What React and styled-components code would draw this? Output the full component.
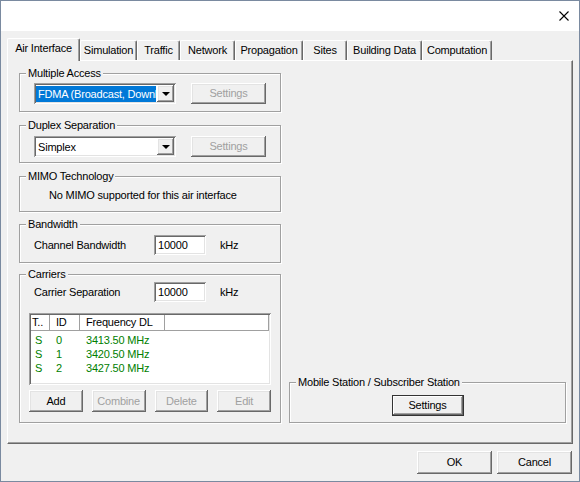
import React from "react";
import styled, { createGlobalStyle, css } from "styled-components";

const tabs = [
    { label: "Air Interface", w: 73 },
    { label: "Simulation", w: 57 },
    { label: "Traffic", w: 43 },
    { label: "Network", w: 55 },
    { label: "Propagation", w: 68 },
    { label: "Sites", w: 44 },
    { label: "Building Data", w: 75 },
    { label: "Computation", w: 70 },
];

const carriers = [
    { type: "S", id: 0, freq: "3413.50 MHz" },
    { type: "S", id: 1, freq: "3420.50 MHz" },
    { type: "S", id: 2, freq: "3427.50 MHz" },
];

const raised = css`
    box-shadow: inset -1px -1px #696969, inset 1px 1px #fff, inset -2px -2px #a0a0a0, inset 2px 2px #e3e3e3;
`;

const sunken = css`
    box-shadow: inset 1px 1px #a0a0a0, inset -1px -1px #fff, inset 2px 2px #696969, inset -2px -2px #e3e3e3;
`;

export default function App() {
    return (
        <>
            <GlobalStyle />
            <Window>
                <TitleBar>
                    <svg width="10" height="10" viewBox="0 0 10 10">
                        <path d="M0.5 0.5 L9.5 9.5 M9.5 0.5 L0.5 9.5" stroke="#000" strokeWidth="1.1" fill="none" />
                    </svg>
                </TitleBar>

                <Body>
                    <TabStrip>
                        {tabs.map((t, i) => (
                            <Tab key={t.label} $w={t.w} $active={i === 0}>{t.label}</Tab>
                        ))}
                    </TabStrip>

                    <Panel>
                        <LeftColumn>
                            <Group $h={45}>
                                <Caption>Multiple Access</Caption>
                                <GroupBody $pt={3} $pl={14}>
                                    <Row $gap={15}>
                                        <Combo>
                                            <ComboValue $selected>FDMA (Broadcast, Downlink)</ComboValue>
                                            <ComboArrow><Triangle /></ComboArrow>
                                        </Combo>
                                        <Button $w={75} $h={21} disabled>Settings</Button>
                                    </Row>
                                </GroupBody>
                            </Group>

                            <Group $h={44} $mt={7}>
                                <Caption>Duplex Separation</Caption>
                                <GroupBody $pt={4} $pl={14}>
                                    <Row $gap={15}>
                                        <Combo>
                                            <ComboValue>Simplex</ComboValue>
                                            <ComboArrow><Triangle /></ComboArrow>
                                        </Combo>
                                        <Button $w={75} $h={21} disabled>Settings</Button>
                                    </Row>
                                </GroupBody>
                            </Group>

                            <Group $h={42} $mt={7}>
                                <Caption>MIMO Technology</Caption>
                                <GroupBody $pt={6} $pl={29}>
                                    No MIMO supported for this air interface
                                </GroupBody>
                            </Group>

                            <Group $h={45} $mt={6}>
                                <Caption>Bandwidth</Caption>
                                <GroupBody $pt={4} $pl={14}>
                                    <Row $gap={14}>
                                        <FieldLabel>Channel Bandwidth</FieldLabel>
                                        <TextBox>10000</TextBox>
                                        <span>kHz</span>
                                    </Row>
                                </GroupBody>
                            </Group>

                            <Group $h={155} $mt={5}>
                                <Caption>Carriers</Caption>
                                <GroupBody $pt={1} $pl={9} $pr={9}>
                                    <Row $gap={14} $indent={5}>
                                        <FieldLabel>Carrier Separation</FieldLabel>
                                        <TextBox>10000</TextBox>
                                        <span>kHz</span>
                                    </Row>

                                    <ListView>
                                        <ListHeader>
                                            <HeaderCell $w={19} $pl={1}>T..</HeaderCell>
                                            <HeaderCell $w={30} $pl={6}>ID</HeaderCell>
                                            <HeaderCell $w={85} $pl={6}>Frequency DL</HeaderCell>
                                            <HeaderCell $fill />
                                        </ListHeader>
                                        {carriers.map((c) => (
                                            <ListRow key={c.id}>
                                                <Cell $w={19} $pl={4}>{c.type}</Cell>
                                                <Cell $w={30} $pl={6}>{c.id}</Cell>
                                                <Cell $w={85} $pl={6}>{c.freq}</Cell>
                                            </ListRow>
                                        ))}
                                    </ListView>

                                    <ButtonGrid>
                                        <Button $h={22}>Add</Button>
                                        <Button $h={22} disabled>Combine</Button>
                                        <Button $h={22} disabled>Delete</Button>
                                        <Button $h={22} disabled>Edit</Button>
                                    </ButtonGrid>
                                </GroupBody>
                            </Group>
                        </LeftColumn>

                        <RightColumn>
                            <Group $h={47}>
                                <Caption>Mobile Station / Subscriber Station</Caption>
                                <GroupBody $pt={6}>
                                    <Row $center>
                                        <Button $w={72} $h={21} $default>Settings</Button>
                                    </Row>
                                </GroupBody>
                            </Group>
                        </RightColumn>
                    </Panel>

                    <Footer>
                        <Button $w={75} $h={23}>OK</Button>
                        <Button $w={75} $h={23}>Cancel</Button>
                    </Footer>
                </Body>
            </Window>
        </>
    );
}

const GlobalStyle = createGlobalStyle`
    html, body {
        margin: 0;
        padding: 0;
        background: #fff;
    }
    body {
        font-family: "Liberation Sans", Arial, sans-serif;
        font-size: 11px;
        line-height: 13px;
        letter-spacing: -0.2px;
        color: #000;
    }
    * {
        box-sizing: border-box;
    }
`;

const Window = styled.div`
    width: 580px;
    height: 482px;
    border: 1px solid #7a8aa0;
    display: flex;
    flex-direction: column;
    background: #f0f0f0;
`;

const TitleBar = styled.div`
    height: 30px;
    background: #fff;
    display: flex;
    justify-content: flex-end;
    align-items: center;
    padding: 0 10px 0 0;
`;

const Body = styled.div`
    flex: 1;
    display: flex;
    flex-direction: column;
    padding: 7px 6px 0 6px;
`;

const TabStrip = styled.div`
    display: flex;
    align-items: flex-end;
    height: 22px;
`;

const Tab = styled.div`
    width: ${(p) => p.$w}px;
    height: ${(p) => (p.$active ? 23 : 20)}px;
    margin-bottom: ${(p) => (p.$active ? -1 : 0)}px;
    padding-bottom: ${(p) => (p.$active ? 3 : 0)}px;
    position: relative;
    z-index: ${(p) => (p.$active ? 1 : 0)};
    display: flex;
    align-items: center;
    justify-content: center;
    background: #f0f0f0;
    border-top: 1px solid #fff;
    border-left: 1px solid #fff;
    border-right: 1px solid #696969;
    box-shadow: inset -1px 0 #a0a0a0;
    border-radius: 2px 2px 0 0;
    white-space: nowrap;
`;

const Panel = styled.div`
    width: 566px;
    height: 384px;
    border-top: 1px solid #fff;
    border-left: 1px solid #fff;
    border-right: 1px solid #696969;
    border-bottom: 1px solid #696969;
    box-shadow: inset -1px -1px #a0a0a0;
    padding: 6px 5px 0 11px;
    display: grid;
    grid-template-columns: 263px 1fr;
    column-gap: 7px;
    align-items: start;
    align-content: start;
`;

const LeftColumn = styled.div`
    display: flex;
    flex-direction: column;
`;

const RightColumn = styled.div`
    align-self: end;
`;

const Group = styled.fieldset`
    height: ${(p) => p.$h}px;
    margin: ${(p) => p.$mt || 0}px 1px 0 0;
    min-width: 0;
    padding: 0;
    border: 1px solid #a0a0a0;
    box-shadow: 1px 1px 0 #fff, inset 1px 1px 0 #fff;
`;

const Caption = styled.legend`
    margin-left: 6px;
    padding: 0 2px;
    line-height: 13px;
    background: #f0f0f0;
`;

const GroupBody = styled.div`
    padding: ${(p) => p.$pt || 0}px ${(p) => p.$pr || 0}px 0 ${(p) => p.$pl || 0}px;
`;

const Row = styled.div`
    display: flex;
    align-items: center;
    gap: ${(p) => p.$gap || 0}px;
    margin-left: ${(p) => p.$indent || 0}px;
    justify-content: ${(p) => (p.$center ? "center" : "flex-start")};
`;

const Combo = styled.div`
    width: 142px;
    height: 21px;
    background: #fff;
    padding: 3px 2px 2px 2px;
    display: flex;
    ${sunken}
`;

const ComboValue = styled.div`
    flex: 1;
    min-width: 0;
    overflow: hidden;
    white-space: nowrap;
    padding: 1px 0 0 2px;
    margin-right: 1px;
    background: ${(p) => (p.$selected ? "#0078d7" : "transparent")};
    color: ${(p) => (p.$selected ? "#fff" : "#000")};
    line-height: 14px;
`;

const ComboArrow = styled.div`
    width: 17px;
    margin-top: -1px;
    background: #f0f0f0;
    display: flex;
    align-items: center;
    justify-content: center;
    ${raised}
`;

const Triangle = styled.span`
    width: 0;
    height: 0;
    border-left: 4px solid transparent;
    border-right: 4px solid transparent;
    border-top: 4px solid #000;
`;

const Button = styled.button`
    width: ${(p) => (p.$w ? `${p.$w}px` : "auto")};
    height: ${(p) => p.$h}px;
    padding: 0;
    border: none;
    font: inherit;
    letter-spacing: inherit;
    color: ${(p) => (p.disabled ? "#a0a0a0" : "#000")};
    background: #f0f0f0;
    ${raised}
    ${(p) =>
        p.$default &&
        css`
            box-shadow: inset 0 0 0 1px #333, inset -2px -2px #696969, inset 2px 2px #fff, inset -3px -3px #a0a0a0;
        `}
`;

const FieldLabel = styled.span`
    width: 106px;
`;

const TextBox = styled.div`
    width: 52px;
    height: 20px;
    background: #fff;
    padding: 3px 4px 0 4px;
    line-height: 14px;
    ${sunken}
`;

const ListView = styled.div`
    margin-top: 11px;
    height: 72px;
    background: #fff;
    padding: 2px;
    ${sunken}
`;

const ListHeader = styled.div`
    display: flex;
    height: 16px;
    margin-bottom: 2px;
`;

const HeaderCell = styled.div`
    width: ${(p) => (p.$w ? `${p.$w}px` : "auto")};
    flex: ${(p) => (p.$fill ? 1 : "none")};
    padding-left: ${(p) => p.$pl || 0}px;
    line-height: 15px;
    background: #fff;
    border-right: 1px solid #a0a0a0;
    border-bottom: 1px solid #a0a0a0;
    white-space: nowrap;
    overflow: hidden;
`;

const ListRow = styled.div`
    display: flex;
    height: 14px;
    color: #008000;
    line-height: 14px;
`;

const Cell = styled.div`
    width: ${(p) => p.$w}px;
    padding-left: ${(p) => p.$pl}px;
    white-space: nowrap;
`;

const ButtonGrid = styled.div`
    margin-top: 5px;
    display: grid;
    grid-template-columns: repeat(4, 1fr);
    column-gap: 9px;
`;

const Footer = styled.div`
    display: flex;
    justify-content: flex-end;
    gap: 5px;
    margin-top: 7px;
    padding-right: 1px;
`;
